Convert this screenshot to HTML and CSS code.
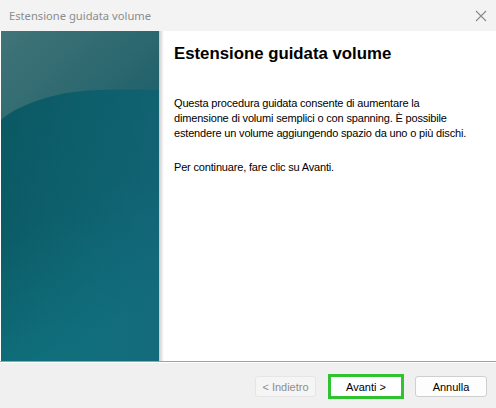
FILE: index.html
```html
<!DOCTYPE html>
<html>
<head>
<meta charset="utf-8">
<link rel="stylesheet" href="styles.css">
</head>
<body>
<div class="window">
  <div class="titlebar">
    <span class="title">Estensione guidata volume</span>
    <svg class="close" width="12" height="12" viewBox="0 0 12 12"><path d="M1 1 L11 11 M11 1 L1 11" stroke="#8a8a8a" stroke-width="1.1" fill="none"/></svg>
  </div>
  <div class="main">
    <div class="banner">
      <svg width="158" height="330" viewBox="0 0 158 330" preserveAspectRatio="none">
        <defs>
          <linearGradient id="base" x1="0" y1="0" x2="0.25" y2="1">
            <stop offset="0" stop-color="#0a5660"/>
            <stop offset="0.6" stop-color="#0b5c67"/>
            <stop offset="1" stop-color="#0f6f7b"/>
          </linearGradient>
          <linearGradient id="side" x1="0" y1="0" x2="1" y2="0">
            <stop offset="0" stop-color="#127080" stop-opacity="0"/>
            <stop offset="1" stop-color="#17677c" stop-opacity="0.55"/>
          </linearGradient>
          <linearGradient id="gloss" x1="0" y1="0" x2="1" y2="0.6">
            <stop offset="0" stop-color="#407478"/>
            <stop offset="0.6" stop-color="#2f6a70"/>
            <stop offset="1" stop-color="#22626c"/>
          </linearGradient>
        </defs>
        <rect width="158" height="330" fill="url(#base)"/>
        <rect width="158" height="330" fill="url(#side)"/>
        <path d="M0 0 H158 V59 C120 58 90 58 65 62 C35 68 12 78 0 89 Z" fill="url(#gloss)"/>
      </svg>
    </div>
    <div class="shadow"></div>
    <div class="content">
      <h1 class="heading">Estensione guidata volume</h1>
      <p class="text">Questa procedura guidata consente di aumentare la<br>dimensione di volumi semplici o con spanning. È possibile<br>estendere un volume aggiungendo spazio da uno o più dischi.</p>
      <p class="text next">Per continuare, fare clic su Avanti.</p>
    </div>
  </div>
  <div class="footer">
    <button class="btn disabled">&lt; Indietro</button>
    <span class="focus"><button class="btn primary">Avanti &gt;</button></span>
    <button class="btn cancel">Annulla</button>
  </div>
</div>
</body>
</html>
```
FILE: styles.css
```css
html, body {
  margin: 0;
  padding: 0;
  background: #f0f0f0;
}
.window {
  width: 496px;
  height: 408px;
  display: flex;
  flex-direction: column;
  overflow: hidden;
}
.titlebar {
  height: 31px;
  background: #f3f3f3;
  display: flex;
  align-items: center;
  justify-content: space-between;
  padding: 0 9px 0 9px;
  box-sizing: border-box;
}
.title {
  font-family: "Noto Sans", sans-serif;
  font-size: 11.2px;
  color: #8c8c8c;
  margin-top: -1px;
}
.main {
  height: 330px;
  display: flex;
  background: #ffffff;
  border-bottom: 1px solid #a0a0a0;
}
.banner {
  width: 158px;
  height: 330px;
  margin-left: 1px;
}
.banner svg {
  display: block;
}
.shadow {
  width: 5px;
  background: linear-gradient(to right, #c9c9c9, #ececec 60%, #ffffff);
}
.content {
  flex: 1;
  padding: 13px 0 0 10px;
  font-family: "Liberation Sans", Arial, sans-serif;
  color: #000;
}
.heading {
  margin: 0;
  font-size: 16.8px;
  font-weight: bold;
  line-height: 20px;
}
.text {
  margin: 32px 0 0 0;
  font-size: 11px;
  line-height: 15px;
  letter-spacing: -0.17px;
}
.text.next {
  margin-top: 19px;
}
.footer {
  flex: 1;
  background: #f0f0f0;
  border-top: 1px solid #ffffff;
  display: flex;
  align-items: flex-start;
  padding: 13px 0 0 255px;
  box-sizing: border-box;
}
.btn {
  font-family: "Liberation Sans", Arial, sans-serif;
  font-size: 11px;
  height: 21px;
  border-radius: 3px;
  padding: 0;
  box-sizing: border-box;
}
.disabled {
  width: 61px;
  background: #f5f5f5;
  border: 1px solid #e5e5e5;
  color: #8d8d8d;
}
.focus {
  margin-left: 12px;
  margin-top: -2px;
  border: 3px solid #2fc42f;
  display: flex;
}
.primary {
  width: 70px;
  height: 19px;
  background: #ffffff;
  border: none;
  border-radius: 0;
  color: #000;
}
.cancel {
  margin-left: 11px;
  width: 72px;
  background: #fdfdfd;
  border: 1px solid #cfcfcf;
  color: #000;
}
```
